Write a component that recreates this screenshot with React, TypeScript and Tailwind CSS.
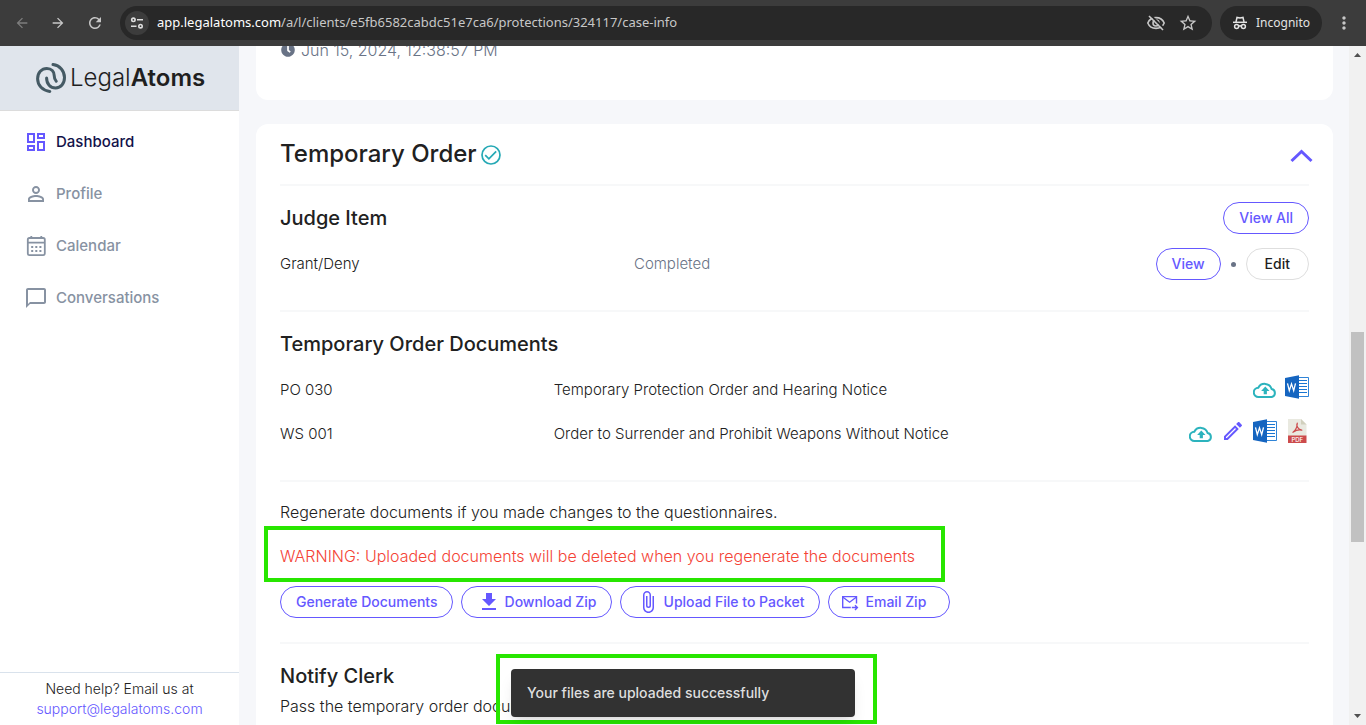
import React from 'react';
import {
  MdAttachFile, MdFileDownload, MdMoreVert, MdOutlineChatBubbleOutline, MdOutlineDashboard,
  MdOutlineEdit, MdPersonOutline, MdRefresh, MdStarOutline, MdArrowBack, MdArrowForward,
} from 'react-icons/md';
import { FaClock } from 'react-icons/fa';

const CalendarIcon = () => (
  <svg viewBox="0 0 24 24" className="w-6 h-6" fill="none" stroke="currentColor" strokeWidth="1.8">
    <rect x="3.8" y="4" width="17" height="17.200" rx="1.6" />
    <path d="M3.8 8.6h17M7.3 2v2.5M17.3 2v2.5" />
    <path d="M7.2 13h2M11.3 13h2M15.4 13h2M7.2 17h2M11.3 17h2M15.4 17h2" strokeWidth="2" />
  </svg>
);

const LogoIcon = () => (
  <svg viewBox="0 0 30 30" className="w-[30px] h-[30px]" fill="none" stroke="#455a64" strokeWidth="3" strokeLinecap="round">
    <path d="M17 1.600C24 2.400 28.500 8 28.500 14.500 28.500 20.600 24.800 24.900 19.600 24.900 14.300 24.900 10.600 21 10.600 15" />
    <path d="M13.800 28.400C6.600 27.600 1.600 22.400 1.600 15.800 1.600 9.700 5.700 5.400 10.800 5.400 15.600 5.400 18.200 8.600 18.200 12.500 18.200 15.200 18.800 16.800 20.200 18.200" />
  </svg>
);

const SiteInfoIcon = () => (
  <svg viewBox="0 0 14 14" className="w-3.5 h-3.5" fill="none" stroke="#dedede" strokeWidth="1.6">
    <circle cx="3.4" cy="3.8" r="1.7" />
    <path d="M7 3.8h6M1 10.2h5.5" />
    <circle cx="10.5" cy="10.2" r="1.7" />
  </svg>
);

const EyeOffIcon = () => (
  <svg viewBox="0 0 20 20" className="w-5 h-5" fill="none" stroke="#c7c7c7" strokeWidth="1.6">
    <path d="M1.8 10C3.2 6.6 6.3 4.6 10 4.6s6.8 2 8.2 5.4c-1.4 3.4-4.5 5.4-8.2 5.4S3.2 13.4 1.8 10z" />
    <circle cx="10" cy="10" r="3" />
    <path d="M4.2 1.8l13.500 13.500" stroke="#282828" strokeWidth="2" />
    <path d="M3 3l14 14" />
  </svg>
);

const IncognitoIcon = () => (
  <svg viewBox="0 0 16 16" className="w-4 h-4" fill="none" stroke="#e3e3e3" strokeWidth="1.5">
    <path d="M1 7.3h14" />
    <path d="M4 7l1-4.6 3 .7 3-.7L12 7" />
    <circle cx="4.6" cy="11.6" r="2" />
    <circle cx="11.4" cy="11.6" r="2" />
    <path d="M6.500 11.300c1-.6 2-.6 3 0" />
  </svg>
);

const CheckIcon = () => (
  <svg viewBox="0 0 20 20" className="mt-0.5 w-5 h-5" fill="none" stroke="#26a9b5" strokeWidth="1.7">
    <circle cx="10" cy="10" r="9" />
    <path d="M4.2 10.2l3.7 3.7 7.3-7.5" />
  </svg>
);

const CloudIcon = () => (
  <svg viewBox="0 0 24 24" className="w-6 h-6" fill="none" stroke="#2cb3bd" strokeWidth="2">
    <path d="M5.500 22a4.500 4.500 0 0 1-.2-9.200A7.200 7.200 0 0 1 18.600 14 4.100 4.100 0 0 1 18.800 22z" />
    <path d="M12.300 11.500l4.200 4.500h-2.600v3.300h-3.200v-3.300H8.100z" fill="#2cb3bd" stroke="none" />
  </svg>
);

const WordIcon = () => (
  <svg viewBox="0 0 24 24" className="w-6 h-6">
    <path d="M13 2.500h10.500v19H13z" fill="#fff" stroke="#1976d2" strokeWidth=".9" />
    <path d="M14 5.500h8M14 8.500h8M14 11.500h8M14 14.500h8M14 17.500h8" stroke="#1976d2" strokeWidth="1.100" />
    <path d="M14 .3v23.400L0 21V3z" fill="#1565c0" />
    <path d="M2.500 8.400l1.800 7.200 2.200-6.700 2.200 6.700 1.800-7.200" fill="none" stroke="#fff" strokeWidth="1.300" />
  </svg>
);

const PdfIcon = () => (
  <svg viewBox="0 0 24 24" className="w-6 h-6">
    <path d="M3 0h13l5.500 5.500V17H3z" fill="#e9e9e0" />
    <path d="M16 0v5.500h5.500z" fill="#d1d0bd" />
    <path d="M8 13.300c2-1.500 4.200-5.400 4.300-9.300-1.700 2.500 1 6.900 4.500 7.200-2.500-.6-6.200.3-8.800 2.100z" fill="none" stroke="#cc4b4c" strokeWidth="1.200" strokeLinejoin="round" />
    <path d="M3 16.500h18.500V24H3z" fill="#cc4b4c" />
    <text x="12.300" y="22.500" fontSize="6" textAnchor="middle" fill="#fff" className="font-['Inter',sans-serif] font-medium">PDF</text>
  </svg>
);

const MailForwardIcon = () => (
  <svg viewBox="0 0 24 24" className="w-6 h-6" fill="none" stroke="currentColor" strokeWidth="1.400">
    <path d="M12.800 17.500H4.700V6.600h13.800v7" />
    <path d="M5 7.200l6.600 5 6.600-5" />
    <path d="M13.800 17.500h5M17 15.200l2.400 2.300-2.400 2.400" />
  </svg>
);

const pill = 'h-8 inline-flex items-center rounded-full border bg-white text-sm font-medium whitespace-nowrap';

const BrowserBar = () => (
  <header className="h-[46px] shrink-0 flex items-center bg-[#3c3c3c] text-[#c7c7c7] font-['Noto_Sans',sans-serif]">
    <div className="flex items-center gap-5 pl-3.5 pr-4">
      <button type="button" aria-label="Back" className="text-[#7d7d7d]"><MdArrowBack size={16} /></button>
      <button type="button" aria-label="Forward"><MdArrowForward size={16} /></button>
      <button type="button" aria-label="Reload"><MdRefresh size={18} /></button>
    </div>
    <div className="flex-1 h-[34px] flex items-center rounded-full bg-[#282828] pl-[5px] pr-3.5">
      <button type="button" aria-label="Site information" className="w-6 h-6 flex items-center justify-center rounded-full bg-[#3c3c3c]">
        <SiteInfoIcon />
      </button>
      <p className="flex-1 pl-2 text-[13px] text-[#c7c7c7] whitespace-nowrap">
        <span className="text-white">app.legalatoms.com</span>/a/l/clients/e5fb6582cabdc51e7ca6/protections/324117/case-info
      </p>
      <button type="button" aria-label="Third-party cookies blocked" className="mr-3"><EyeOffIcon /></button>
      <button type="button" aria-label="Bookmark this tab"><MdStarOutline size={20} /></button>
    </div>
    <div className="ml-2 h-[34px] flex items-center gap-2 rounded-full bg-[#282828] px-3 text-xs text-[#e3e3e3]">
      <IncognitoIcon />
      Incognito
    </div>
    <button type="button" aria-label="Menu" className="mx-3"><MdMoreVert size={20} /></button>
  </header>
);

const navItems = [
  { label: 'Dashboard', icon: <MdOutlineDashboard size={24} />, active: true },
  { label: 'Profile', icon: <MdPersonOutline size={24} />, active: false },
  { label: 'Calendar', icon: <CalendarIcon />, active: false },
  { label: 'Conversations', icon: <MdOutlineChatBubbleOutline size={24} />, active: false },
];

const Sidebar = () => (
  <aside className="w-[239px] shrink-0 flex flex-col bg-white">
    <div className="h-[65px] flex items-center gap-1 pl-9 bg-[#e0e5ec] border-b border-[#dcdcdc] text-2xl text-[#1f1f1f]">
      <LogoIcon />
      <span className="font-light">Legal<span className="font-semibold">Atoms</span></span>
    </div>
    <nav className="flex-1 pt-[5px]">
      {navItems.map((item) => (
        <a key={item.label} href="#" className="h-[52px] flex items-center gap-2 pl-6 text-[15px] font-medium">
          <span className={item.active ? 'text-[#6558ff]' : 'text-[#8792a2]'}>{item.icon}</span>
          <span className={item.active ? 'text-[#12124a]' : 'text-[#8792a2]'}>{item.label}</span>
        </a>
      ))}
    </nav>
    <div className="py-1.5 border-t border-[#d9e2ec] text-center text-sm leading-5 font-light text-[#212121]">
      <p>Need help? Email us at</p>
      <a href="#" className="text-[#6558ff]">support@legalatoms.com</a>
    </div>
  </aside>
);

const Section = ({ title, action, children }: {
  title?: string, action?: React.ReactNode, children: React.ReactNode
}) => (
  <section className="border-t-2 border-[#f7f8f9] pb-6">
    {title && (
      <div className="mt-4 h-8 flex items-center justify-between">
        <h2 className="text-xl font-medium">{title}</h2>
        {action}
      </div>
    )}
    {children}
  </section>
);

const documents = [
  { code: 'PO 030', name: 'Temporary Protection Order and Hearing Notice', editable: false },
  { code: 'WS 001', name: 'Order to Surrender and Prohibit Weapons Without Notice', editable: true },
];

const TemporaryOrder = () => (
  <article className="rounded-xl bg-white px-6">
    <div className="h-[60px] flex items-center justify-between">
      <h1 className="flex items-center gap-1 text-2xl font-medium">
        Temporary Order
        <CheckIcon />
      </h1>
      <button type="button" aria-label="Collapse" className="-mr-1">
        <svg viewBox="0 0 24 24" className="w-6 h-6" fill="none" stroke="#6558ff" strokeWidth="3">
          <path d="M2.500 19L12.500 9.500 22.500 19" />
        </svg>
      </button>
    </div>

    <Section
      title="Judge Item"
      action={<button type="button" className={`${pill} px-[15px] border-[#6558ff] text-[#6558ff]`}>View All</button>}
    >
      <table className="mt-2 w-full table-fixed">
        <tbody>
          <tr className="h-11">
            <td className="w-[34.4%]">Grant/Deny</td>
            <td className="text-[#697386]">Completed</td>
            <td>
              <div className="flex items-center justify-end gap-2.5">
                <button type="button" className={`${pill} px-[15px] border-[#6558ff] text-[#6558ff]`}>View</button>
                <span className="w-[5px] h-[5px] rounded-full bg-[#697386]" />
                <button type="button" className={`${pill} px-[18px] border-[#dedede] text-[#1f1f1f]`}>Edit</button>
              </div>
            </td>
          </tr>
        </tbody>
      </table>
    </Section>

    <Section title="Temporary Order Documents">
      <table className="mt-2 w-full table-fixed">
        <tbody>
          {documents.map((doc) => (
            <tr key={doc.code} className="h-11">
              <td className="w-[26.6%]">{doc.code}</td>
              <td>{doc.name}</td>
              <td className="w-40">
                <div className="flex justify-end gap-2 pb-1.5">
                  <button type="button" aria-label="Upload"><CloudIcon /></button>
                  {doc.editable && (
                    <button type="button" aria-label="Edit" className="text-[#6558ff]"><MdOutlineEdit size={24} /></button>
                  )}
                  <button type="button" aria-label="Download Word file"><WordIcon /></button>
                  {doc.editable && <button type="button" aria-label="Download PDF file"><PdfIcon /></button>}
                </div>
              </td>
            </tr>
          ))}
        </tbody>
      </table>
    </Section>

    <Section>
      <p className="mt-2 leading-[44px] text-base">Regenerate documents if you made changes to the questionnaires.</p>
      <div className="relative w-fit">
        <p className="leading-[44px] text-base text-[#f44336]">
          WARNING: Uploaded documents will be deleted when you regenerate the documents
        </p>
        <div className="absolute -left-4 -right-[30px] -top-2 -bottom-1 border-4 border-[#28e600]" />
      </div>
      <div className="mt-2 flex gap-2 text-[#6558ff]">
        <button type="button" className={`${pill} pl-[15px] pr-3.5 border-[#6558ff]`}>Generate Documents</button>
        <button type="button" className={`${pill} gap-1 pl-[15px] pr-3.5 border-[#6558ff]`}>
          <MdFileDownload size={24} />Download Zip
        </button>
        <button type="button" className={`${pill} gap-1 pl-[15px] pr-3.5 border-[#6558ff]`}>
          <MdAttachFile size={24} />Upload File to Packet
        </button>
        <button type="button" className={`${pill} gap-1 pl-[9px] pr-[23px] border-[#6558ff]`}>
          <MailForwardIcon />Email Zip
        </button>
      </div>
    </Section>

    <Section title="Notify Clerk">
      <p className="leading-7 text-base">Pass the temporary order documents</p>
    </Section>
  </article>
);

const Scrollbar = () => (
  <div className="w-[17px] shrink-0 flex flex-col items-center bg-[#f1f1f1]">
    <svg viewBox="0 0 17 17" className="w-[17px] h-[17px]"><path d="M5 11l3.500-4L12 11z" fill="#505050" /></svg>
    <div className="grow-[269]" />
    <div className="w-[13px] h-[210px] bg-[#c1c1c1]" />
    <div className="grow-[166]" />
    <svg viewBox="0 0 17 17" className="w-[17px] h-[17px]"><path d="M5 6l3.500 4L12 6z" fill="#505050" /></svg>
  </div>
);

export default function App() {
  return (
    <div className="relative h-screen flex flex-col overflow-hidden font-['Inter',sans-serif] text-[#212121]">
      <BrowserBar />
      <div className="flex-1 min-h-0 flex">
        <Sidebar />
        <main className="flex-1 min-w-0 overflow-hidden bg-[#f6f7fa] pl-[17px] pr-4 text-[15px] font-light">
          <div className="-mt-[34px] flex flex-col gap-6">
            <article className="rounded-xl bg-white px-6 pt-[26px] pb-[38px]">
              <p className="h-6 flex items-center gap-1.5 pl-px text-base text-[#697386]">
                <FaClock size={14} />
                Jun 15, 2024, 12:38:57 PM
              </p>
            </article>
            <TemporaryOrder />
          </div>
        </main>
        <Scrollbar />
      </div>
      <div className="absolute bottom-px left-1/2 -ml-[187px] w-[381px] border-4 border-[#28e600] pt-[11px] pb-[3px] pl-[11px] pr-[18px]">
        <div role="status" className="h-12 flex items-center rounded bg-[#323232] px-4 text-sm font-medium text-[#dedede] shadow-lg">
          Your files are uploaded successfully
        </div>
      </div>
    </div>
  );
}
